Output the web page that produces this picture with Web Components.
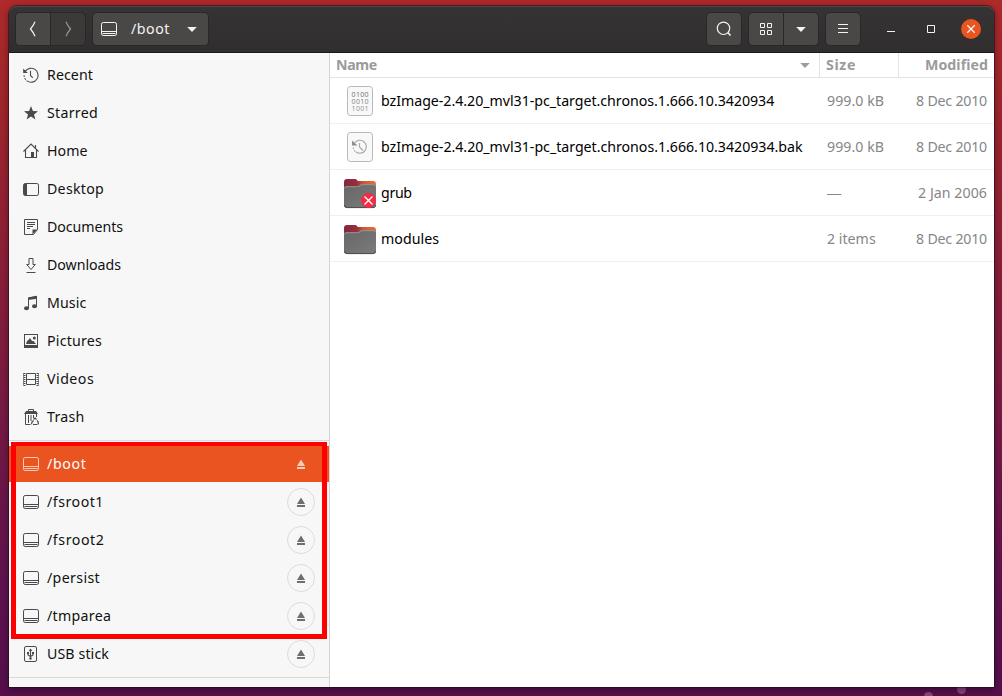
<!DOCTYPE html>
<html lang="en"><head><meta charset="utf-8"><title>/boot</title>
<style>
html,body{margin:0;height:100%;overflow:hidden}
body{font:14.2px/20px "Noto Sans","Open Sans",sans-serif;color:#111;background:#5a1048}
</style></head><body>
<desk-top></desk-top>
<script>
const define=(name,css,html,setup)=>customElements.define(name,class extends HTMLElement{
  connectedCallback(){
    if(this.shadowRoot)return;
    const r=this.attachShadow({mode:'open'});
    r.innerHTML=`<style>*{box-sizing:border-box}${css}</style>${typeof html==='function'?html(this):html}`;
    if(setup)setup(this,r);
  }
});
const S='fill="none" stroke="currentColor"';
const drive=`<g ${S}><rect x=".5" y="1.5" width="15" height="13" rx="1.7"/><path d="M1 10.5h14M1.5 12.5h13"/></g>`;
const ICONS={
 recent:`<g ${S} stroke-width="1.1"><path d="M2.2 4.4A7 7 0 1 1 4 13.9" /><path d="M1.1 8.2A7 7 0 0 0 4 13.9" stroke-dasharray="1.8 1.2"/><path d="M7.5 3.8v4.7l2.3 2.3"/></g><path d="M.2 1.6v4.5h4.6z" fill="currentColor"/>`,
 starred:`<path fill="currentColor" d="M8 1l1.9 5 5.1.3-4 3.2 1.4 5L8 11.6l-4.4 2.9L5 9.500 1 6.300 6.100 6z"/>`,
 home:`<g ${S} stroke-width="1.1"><path d="M.5 8.500L8 1l7.500 7.500M12.500 2v3M2.500 7v7.500h11V7"/></g><path fill="currentColor" d="M8 9h3v5.500H8z"/>`,
 desktop:`<rect x=".5" y="2.500" width="15" height="12" rx="1.700" ${S}/><path fill="currentColor" d="M1 3h3v11H1z"/>`,
 documents:`<g ${S}><path d="M1.500.500h13v10l-4 5h-9z"/><path d="M4 3.500h8M4 5.500h8M4 7.500h6M4 9.500h3"/></g><path fill="currentColor" d="M9.500 15.500v-5h5z"/>`,
 downloads:`<g ${S}><path d="M6 1.500h4v6h2.300L8 12.500 3.700 7.500H6zM3.500 15.500h9"/></g>`,
 music:`<path ${S} d="M5.500 13V3l8-1.500V11"/><path fill="currentColor" d="M5 2.500l9-1.700v3L5 5z"/><ellipse cx="3.500" cy="13.200" rx="2.500" ry="2" fill="currentColor"/><ellipse cx="11.500" cy="11.300" rx="2.500" ry="2" fill="currentColor"/>`,
 pictures:`<rect x="1.500" y="1.500" width="13" height="12.500" ${S}/><path fill="currentColor" d="M1 12h14v3H1zM3 11l1-3 1.500-1L7 5l2 3 1.500 0L13 11z"/><circle cx="11.300" cy="5" r="1.500" fill="currentColor"/>`,
 videos:`<g ${S}><path d="M3.500 2.500h9v11h-9zM3.500 8.500h9"/><path d="M1.500 2v13M14.500 2v13" stroke-width="2" stroke-dasharray="1 1"/><path d="M.500 2v12.500M15.500 2v12.500" stroke-opacity=".6"/></g>`,
 trash:`<g ${S}><path d="M5.500 2.500v-2h5v2M2.500 5v10.500h5M13.500 5v3M5.500 6v8M8 6v6M10.500 6v3"/><path d="M10.500 10.500l1.500-1.500 1.500 1.500M8.500 15.200c0-2 1-3 2-3.700M10 15.500h4M14 11.500c2 1.500 1.500 3.500.5 4" stroke-width="1.200"/></g><path fill="currentColor" d="M1 5l2-3h10l2 3z"/>`,
 drive,
 usb:`<g ${S}><rect x="1.500" y=".500" width="12" height="15" rx="1.500"/><path d="M7.500 3.500v9M5 7v2l2.500 1.500L10 9V7" stroke-width="1.100"/></g><path fill="currentColor" d="M5.700 5L7.500 2.500 9.300 5zM4 6h2v2H4zM9 6h2v2H9z"/><circle cx="7.500" cy="12.500" r="1.200" fill="currentColor"/>`,
 eject:`<path fill="currentColor" d="M8 3.500l4 6.500H4zM4 11h8v2H4z"/>`,
 back:`<path ${S} stroke-width="1.200" d="M10 .800Q8.500 4.500 5.500 8q3 3.500 4.500 7.200"/>`,
 forward:`<path ${S} stroke-width="1.200" d="M6 .800Q7.500 4.500 10.500 8q-3 3.500-4.500 7.200"/>`,
 down:`<path fill="currentColor" d="M3.200 6h9.600L8 11z"/>`,
 search:`<g ${S} stroke-width="1.200"><circle cx="7.500" cy="7.300" r="6.200"/><path d="M11.800 11.500l2.700 3" stroke-width="1.600"/></g>`,
 grid:`<path ${S} d="M2.500 2.500h4v4h-4zM9.500 2.500h4v4h-4zM2.500 9.500h4v4h-4zM9.500 9.500h4v4h-4z"/>`,
 menu:`<path ${S} d="M3 3.500h10M3 7.500h10M3 11.500h10"/>`,
 min:`<path ${S} d="M4 10.500h8"/>`,
 max:`<path ${S} d="M4.500 4.500h7v7h-7z"/>`,
 close:`<path ${S} stroke-width="1.300" d="M4.300 4.300l7.400 7.400M11.700 4.300l-7.400 7.400"/>`
};
define('ui-icon',':host{display:block;width:16px;height:16px;flex:none}svg{display:block;overflow:visible}',
 e=>`<svg width="16" height="16" viewBox="0 0 16 16">${ICONS[e.getAttribute('name')]}</svg>`);

/* Label whose tracking is adjusted to fill a given advance width. */
define('ui-label',':host{display:block;white-space:pre;flex:none}span{display:inline-block}','<span><slot></slot></span>',(e,r)=>{
  const w=+e.getAttribute('w'),s=r.querySelector('span');
  if(w){const n=e.textContent.length,d=w-s.getBoundingClientRect().width;s.style.letterSpacing=(d/n)+'px';e.style.width=w+'px';}
});

define('tool-button',`:host{display:flex;align-items:center;justify-content:center;width:34px;height:32px;box-sizing:border-box;background:#4a4846;color:#f4f3f1;border-radius:4px;box-shadow:0 0 0 1px #292727;flex:none}
:host([side=left]){border-radius:4px 0 0 4px}:host([side=right]){border-radius:0 4px 4px 0;margin-left:1px}:host([off]){background:#3c3a39;color:#969492}`,'<slot></slot>');

define('header-bar',`:host{display:flex;align-items:center;height:47px;padding:0 13px 1px 7px;box-sizing:border-box;background:linear-gradient(#353333,#302e2e);border-bottom:1px solid #1b1919;border-radius:8px 8px 0 0;box-shadow:inset 0 1px #4b4949;color:#f4f3f1;flex:none}
.path{width:115px;margin-left:8px;justify-content:flex-start;padding-left:8px}
.path ui-label{margin:0 14px 0 14px}.gap{flex:1}.m{margin-left:8px}
.win{margin-left:24px}.close{width:20px;height:20px;border-radius:50%;background:#e95420;display:grid;place-items:center;margin-left:22px}`,
`<tool-button side="left"><ui-icon name="back"></ui-icon></tool-button><tool-button side="right" off><ui-icon name="forward"></ui-icon></tool-button>
<tool-button class="path"><ui-icon name="drive"></ui-icon><ui-label w="39">/boot</ui-label><ui-icon name="down"></ui-icon></tool-button><div class="gap"></div>
<tool-button><ui-icon name="search"></ui-icon></tool-button>
<tool-button class="m" side="left"><ui-icon name="grid"></ui-icon></tool-button><tool-button side="right"><ui-icon name="down"></ui-icon></tool-button>
<tool-button class="m"><ui-icon name="menu"></ui-icon></tool-button>
<ui-icon class="win" name="min" style="margin-left:23px"></ui-icon><ui-icon class="win" name="max"></ui-icon><div class="close"><ui-icon name="close"></ui-icon></div>`);

define('place-row',`:host{display:flex;align-items:center;height:36px;margin:1px 0;padding:0 14px;box-sizing:border-box;flex:none}
ui-icon{color:#4a4a4a}.t{margin-left:8px}.e{width:28px;height:28px;border:1px solid #dcdcdc;border-radius:50%;display:grid;place-items:center;margin-left:auto}.e ui-icon{color:#6e6e6e}
:host([selected]){background:#e95420;color:#fff}:host([selected]) ui-icon{color:#f9cbb9}:host([selected]) .e{border-color:transparent}`,
 e=>`<ui-icon name="${e.getAttribute('icon')}"></ui-icon><ui-label class="t" w="${e.getAttribute('w')}">${e.getAttribute('label')}</ui-label>${e.hasAttribute('eject')?'<div class="e"><ui-icon name="eject"></ui-icon></div>':''}`);

const row=(icon,label,w,x='')=>`<place-row icon="${icon}" label="${label}" w="${w}" ${x}></place-row>`;
define('places-sidebar',`:host{display:flex;flex-direction:column;width:321px;box-sizing:border-box;background:#f7f7f7;border-right:1px solid #d4d4d4;padding-top:3px;flex:none;position:relative}
hr{border:0;height:1px;background:#dadada;margin:4px 0;width:100%;flex:none}
.mark{position:absolute;left:2px;top:389px;width:316px;height:197px;border:5px solid #f00;border-top-width:4px}`,
 row('recent','Recent',46)+row('starred','Starred',51)+row('home','Home',40.500)+row('desktop','Desktop',57)+row('documents','Documents',76)+row('downloads','Downloads',74)+row('music','Music',39.500)+row('pictures','Pictures',55)+row('videos','Videos',47.200)+row('trash','Trash',37.500)+'<hr>'+
 row('drive','/boot',39.500,'eject selected')+row('drive','/fsroot1',57,'eject')+row('drive','/fsroot2',57.500,'eject')+row('drive','/persist',53,'eject')+row('drive','/tmparea',64.200,'eject')+row('usb','USB stick',62,'eject')+'<hr><div class="mark"></div>');

const folder=`<defs><linearGradient id="b"><stop stop-color="#84243f"/><stop offset=".4" stop-color="#96303f"/><stop offset=".6" stop-color="#c9573a"/><stop offset="1" stop-color="#e9703a"/></linearGradient><linearGradient id="g" x2="1" y2="1"><stop stop-color="#666"/><stop offset="1" stop-color="#7c7c7c"/></linearGradient></defs>
<path d="M3 2h8.500q1 0 2.300 2H29q3 0 3 3v15H0V5q0-3 3-3z" fill="url(#b)"/><path d="M0 11.300q0-2 2-2h11.500q1.500 0 2.300-1 .8-1 2.200-1h12q2 0 2 2V28q0 3-3 3H3q-3 0-3-3z" fill="url(#g)"/><path d="M.5 11.300q0-1.600 1.700-1.600h11.300q1.500 0 2.500-1 .8-1 2.200-1h11.600q1.700 0 1.700 1.600" fill="none" stroke="#a2a2a2" stroke-width=".8"/><path d="M.500 28q0 2.600 2.600 2.600h25.800q2.600 0 2.600-2.600" fill="none" stroke="#4c4c4c"/>`;
const paper=`<rect x="3.500" y="1.500" width="25" height="29" rx="3" fill="#f8f8f8" stroke="#b9b9b9"/>`;
const FILES={
 folder,
 locked:folder+`<circle cx="24.500" cy="23.500" r="7.500" fill="#f22c42"/><path d="M20.500 19.500l8 8M28.500 19.500l-8 8" stroke="#fff" stroke-width="1.300"/>`,
 binary:paper+`<g font-family="Noto Sans,sans-serif" font-size="7" fill="#777"><text x="7.600" y="12" textLength="17">0100</text><text x="7.600" y="19" textLength="17" fill="#8b8b8b">0010</text><text x="7.600" y="26" textLength="17" fill="#999">1001</text></g>`,
 backup:paper+`<g fill="none" stroke="#aaa" stroke-width="1.200"><path d="M10.500 12A6.500 6.500 0 1 1 12 21"/><path d="M9.300 16.500A6.500 6.500 0 0 0 12 21" stroke-dasharray="1.500 1.500"/><path d="M15.500 12v4l3.500 3.500"/></g><path d="M8 9.500v5h5.500z" fill="#8c8c8c"/>`
};
define('file-row',`:host{display:grid;grid-template-columns:490px 79px 1fr;height:46px;box-sizing:border-box;border-bottom:1px solid #f0f0f0;align-items:center}
.n{display:flex;align-items:center;padding-left:14px;color:#000}.n ui-label{margin-left:5px}.d{color:#868686}.s{padding-left:7px}.r{justify-self:end;margin-right:7px}.dash{font-family:"Liberation Sans",sans-serif}svg{display:block}`,
 e=>{const a=k=>e.getAttribute(k);return `<div class="n"><svg width="32" height="32" viewBox="0 0 32 32">${FILES[a('icon')]}</svg><ui-label w="${a('nw')}">${a('name')}</ui-label></div><div class="d s"><ui-label ${a('size')==='—'?'class="dash"':''} w="${a('sw')}">${a('size')}</ui-label></div><ui-label class="d r" w="${a('dw')}">${a('date')}</ui-label>`});

define('file-list',`:host{display:block;flex:1;background:#fff}
.h{display:grid;grid-template-columns:489px 79px 1fr;height:25px;border-bottom:1px solid #e3e3e3;font-weight:700;color:#9b9b9b}
.h>div{display:flex;align-items:center;padding-left:6px;padding-bottom:1px}.h>div+div{border-left:1px solid #e3e3e3}.h>div:first-child{justify-content:space-between;padding-right:6px}.h>div:last-child{justify-content:flex-end;padding-right:6px}`,
`<div class="h"><div><ui-label w="41">Name</ui-label><ui-icon name="down"></ui-icon></div><div><ui-label w="30">Size</ui-label></div><div><ui-label w="63">Modified</ui-label></div></div>
<file-row icon="binary" name="bzImage-2.4.20_mvl31-pc_target.chronos.1.666.10.3420934" nw="393.300" size="999.0 kB" sw="57" date="8 Dec 2010" dw="71"></file-row>
<file-row icon="backup" name="bzImage-2.4.20_mvl31-pc_target.chronos.1.666.10.3420934.bak" nw="421.500" size="999.0 kB" sw="57" date="8 Dec 2010" dw="71"></file-row>
<file-row icon="locked" name="grub" nw="30.700" size="—" sw="15" date="2 Jan 2006" dw="69"></file-row>
<file-row icon="folder" name="modules" nw="58" size="2 items" sw="48.700" date="8 Dec 2010" dw="71"></file-row>`);

define('file-window',`:host{display:flex;flex-direction:column;height:681px;width:985px;border-radius:8px 8px 0 0;box-shadow:0 0 0 1px rgba(35,10,25,.55),0 2px 7px 1px rgba(0,0,0,.35);position:relative}.b{display:flex;flex:1;min-height:0}`,
`<header-bar></header-bar><div class="b"><places-sidebar></places-sidebar><file-list></file-list></div>`);

define('desk-top',`:host{display:block;width:1002px;height:696px;box-sizing:border-box;padding:6px 8px 9px 9px;overflow:hidden;position:relative;background:linear-gradient(#ae2a2a,#a0262c 15%,#8b1f38 38%,#761a44 60%,#5f1250 85%,#560f4c)}
i{position:absolute;width:9px;height:9px;border-radius:50%;background:#85467d}`,
`<i style="left:924px;top:692px"></i><i style="left:957px;top:685px"></i><file-window></file-window>`);
</script></body></html>
